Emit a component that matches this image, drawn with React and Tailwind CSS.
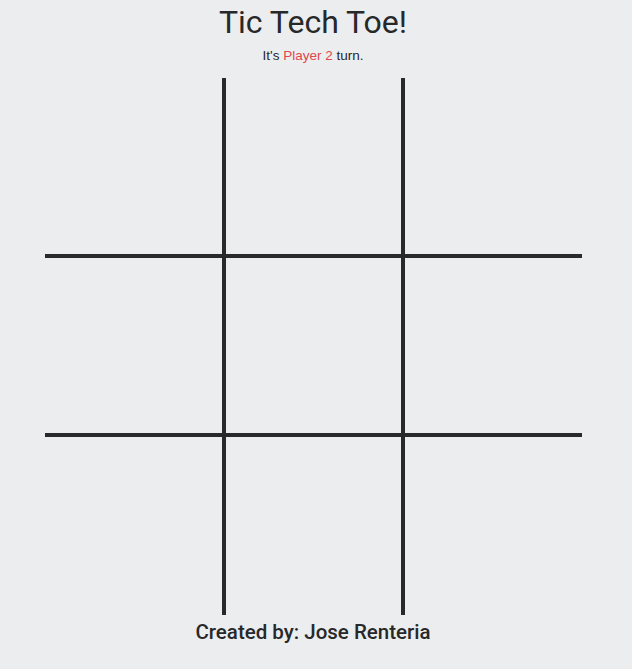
const cells = [
  "",
  "border-x-4",
  "",
  "border-y-4",
  "border-4",
  "border-y-4",
  "",
  "border-x-4",
  "",
];

export default function App() {
  return (
    <div className="min-h-screen w-full bg-[#ecedef] text-[#27282a] font-['Liberation_Sans',Arial,sans-serif]">
      <div className="w-[626px] flex flex-col items-center">
        <h1 className="pt-[2px] text-[32px] leading-[40px] font-['Roboto',Arial,sans-serif]">
          Tic Tech Toe!
        </h1>
        <p className="mt-[6px] text-[13.5px] leading-[16px]">
          It's <span className="text-[#e0474c]">Player 2</span> turn.
        </p>

        {/* Board */}
        <div className="mt-[14px] grid grid-cols-[177px_183px_177px] grid-rows-[176px_183px_178px]">
          {cells.map((c, i) => (
            <div key={i} className={`border-[#28292b] ${c}`} />
          ))}
        </div>

        <footer className="mt-[5px] text-[20.5px] leading-[24px] font-medium font-['Roboto',Arial,sans-serif]">
          Created by: Jose Renteria
        </footer>
      </div>
    </div>
  );
}
